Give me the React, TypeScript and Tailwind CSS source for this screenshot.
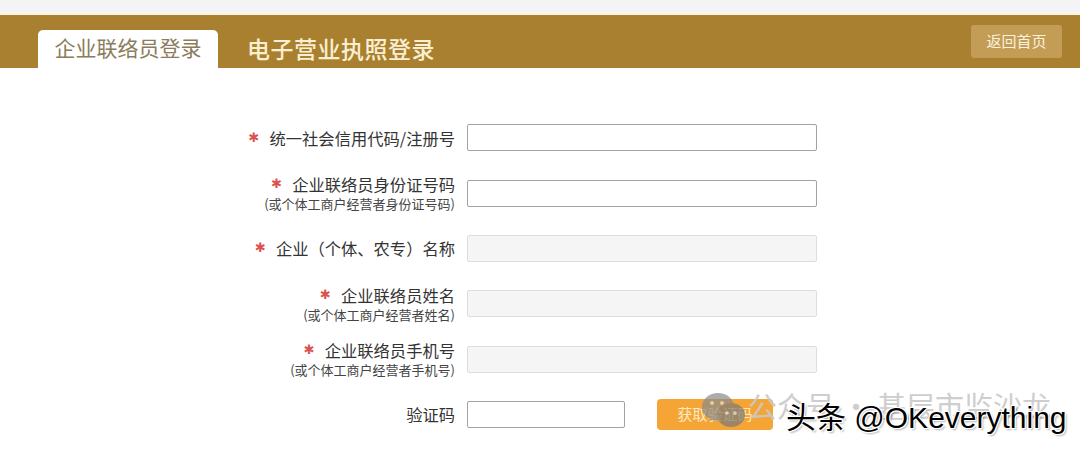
import React from "react";

const font = { fontFamily: '"Noto Sans CJK SC", "Noto Sans", sans-serif' };

function Star() {
  return (
    <span
      className="text-[#d9534f] text-[13px] leading-[20px]"
      style={{ fontFamily: '"DejaVu Sans", sans-serif' }}
    >
      ✱
    </span>
  );
}

type Row = { label: string; sub?: string; required: boolean; disabled: boolean };

const rows: Row[] = [
  { label: "统一社会信用代码/注册号", required: true, disabled: false },
  { label: "企业联络员身份证号码", sub: "(或个体工商户经营者身份证号码)", required: true, disabled: false },
  { label: "企业（个体、农专）名称", required: true, disabled: true },
  { label: "企业联络员姓名", sub: "(或个体工商户经营者姓名)", required: true, disabled: true },
  { label: "企业联络员手机号", sub: "(或个体工商户经营者手机号)", required: true, disabled: true },
];

export default function App() {
  return (
    <div className="relative w-[1080px] h-[450px] overflow-hidden bg-white" style={font}>
      <div className="h-[13px] bg-[#f4f4f6]" />
      <div className="h-[2px] bg-[#fbf3df]" />
      <div className="h-[53px] bg-[#a98030] flex items-end pl-[38px] pr-[18px]">
        <div className="w-[180px] h-[38px] bg-white rounded-t-[5px] flex items-center justify-center text-[21px] text-[#8a7c5c] pb-[2px]">
          企业联络员登录
        </div>
        <div className="ml-[29px] h-[38px] flex items-center text-[23px] font-medium tracking-[0.5px] text-[#fbefd2] pb-[2px]">
          电子营业执照登录
        </div>
        <div className="ml-auto self-start mt-[10px] w-[91px] h-[33px] rounded-[3px] bg-[#c39d55] flex items-center justify-center text-[15px] text-[#fbf2de]">
          返回首页
        </div>
      </div>

      <div className="pt-[42px] flex flex-col text-[#333]">
        {rows.map((r) => (
          <div key={r.label} className="h-[55.4px] flex items-center">
            <div className="w-[455px] flex flex-col items-end">
              <div className="flex items-center gap-[10px] text-[16.3px] leading-[20px]">
                {r.required && <Star />}
                <span>{r.label}</span>
              </div>
              {r.sub && <div className="text-[13px] leading-[16px] mt-[2px] text-[#444]">{r.sub}</div>}
            </div>
            <div
              className={
                r.disabled
                  ? "ml-[12px] w-[350px] h-[27px] rounded-[2px] border border-[#dedede] bg-[#f5f5f5]"
                  : "ml-[12px] w-[350px] h-[27px] rounded-[2px] border border-[#a3a3a3] bg-white"
              }
            />
          </div>
        ))}
        <div className="h-[55.4px] flex items-center">
          <div className="w-[455px] flex justify-end text-[16.3px]">验证码</div>
          <div className="ml-[12px] w-[158px] h-[27px] rounded-[2px] border border-[#a3a3a3] bg-white" />
          <div className="ml-[32px] w-[116px] h-[31px] rounded-[4px] bg-[#f5a535] flex items-center justify-center text-[15px] text-[#fde9c4]">
            获取验证码
          </div>
        </div>
      </div>

      {/* watermark overlays */}
      <div className="absolute left-[700px] top-[391px] flex items-center opacity-70">
        <svg width="48" height="40" viewBox="0 0 48 40">
          <ellipse cx="18" cy="16" rx="16" ry="14" fill="#8a8a8a" />
          <ellipse cx="31" cy="24" rx="14" ry="12" fill="#7a7a7a" />
          <circle cx="12" cy="12" r="2" fill="#ddd" />
          <circle cx="22" cy="12" r="2" fill="#ddd" />
          <circle cx="27" cy="22" r="1.8" fill="#ddd" />
          <circle cx="35" cy="22" r="1.8" fill="#ddd" />
        </svg>
      </div>
      <div className="absolute left-[748px] top-[387px] text-[29px] leading-[36px] text-[#c9c9c9] opacity-90 whitespace-nowrap">
        公众号 · 基层市监沙龙
      </div>
      <div
        className="absolute left-[786px] top-[399px] text-[30px] leading-[38px] text-black whitespace-nowrap"
        style={{
          fontFamily: '"Liberation Sans", "Noto Sans CJK SC", sans-serif',
          textShadow: "1px 1px 0 #fff, -1px -1px 0 #fff, 1px -1px 0 #fff, -1px 1px 0 #fff, 2px 2px 2px rgba(0,0,0,0.3)",
        }}
      >
        头条 @OKeverything
      </div>
    </div>
  );
}
